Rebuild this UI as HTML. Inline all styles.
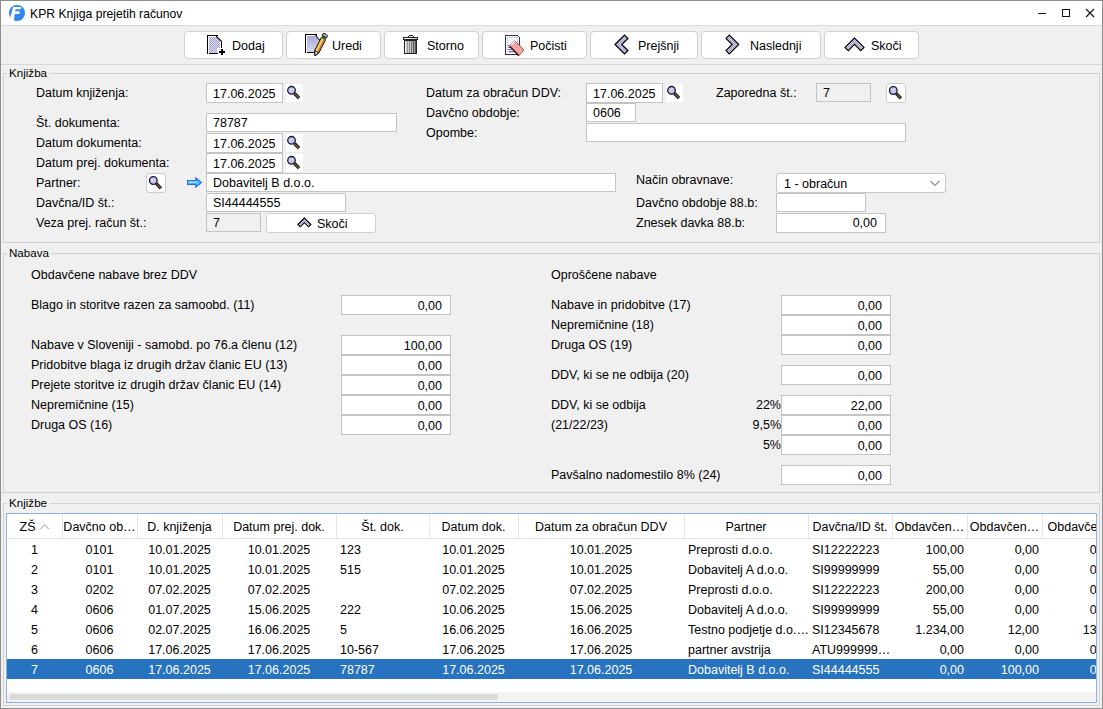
<!DOCTYPE html><html><head><meta charset="utf-8"><style>
html,body{margin:0;padding:0}
body{width:1103px;height:709px;position:relative;overflow:hidden;background:#f0f0f0;font-family:"Liberation Sans",sans-serif;font-size:12.5px;color:#000}
.t{position:absolute;line-height:20px;height:20px;white-space:nowrap}
svg{overflow:visible;display:block}
</style></head><body>
<svg width="0" height="0" style="position:absolute"><defs><pattern id="dith" x="0" y="0" width="2" height="2" patternUnits="userSpaceOnUse"><rect width="2" height="2" fill="#dcdcf4"/><rect width="1" height="1" fill="#a4a4d0"/><rect x="1" y="1" width="1" height="1" fill="#a4a4d0"/></pattern>
<pattern id="dith2" x="0" y="0" width="2" height="2" patternUnits="userSpaceOnUse"><rect width="2" height="2" fill="#d4d4ee"/><rect width="1" height="1" fill="#9c9cc4"/><rect x="1" y="1" width="1" height="1" fill="#9c9cc4"/></pattern>
<linearGradient id="lav" x1="0" y1="0" x2="0" y2="1"><stop offset="0" stop-color="#a8a8d8"/><stop offset="1" stop-color="#d8d8f4"/></linearGradient></defs></svg>
<div style="position:absolute;left:0px;top:0px;width:1103px;height:709px;box-sizing:border-box;border:1px solid #8e8e8e;"></div>
<div style="position:absolute;left:1px;top:1px;width:1101px;height:24px;box-sizing:border-box;background:#fff;"></div>
<div style="position:absolute;left:1px;top:25px;width:1101px;height:1px;box-sizing:border-box;background:#dadada;"></div>
<svg width="19" height="19" viewBox="8 4 19 19" style="position:absolute;left:8px;top:4px" ><circle cx="17" cy="13" r="8" fill="#2f86ee"/><path d="M13.1 7 L21.3 7 L20.9 9.2 L15.5 9.2 L15.1 11.3 L19.8 11.3 L19.4 14 L14.7 14 L13.9 21.5 L11.5 20.2 L10.3 17.8 Z" fill="#fff"/></svg>
<div class="t" style="left:30px;top:4px;font-size:12.2px;">KPR Knjiga prejetih računov</div>
<div style="position:absolute;left:1038px;top:13px;width:8px;height:1px;box-sizing:border-box;background:#111;"></div>
<div style="position:absolute;left:1062px;top:9px;width:8px;height:8px;box-sizing:border-box;border:1px solid #111;"></div>
<svg width="10" height="10" viewBox="1085 8 10 10" style="position:absolute;left:1085px;top:8px" ><path d="M1086 9 L1094 17 M1094 9 L1086 17" stroke="#111" stroke-width="1.1"/></svg>
<div style="position:absolute;left:1px;top:64px;width:1101px;height:1px;box-sizing:border-box;background:#d8d8d8;"></div>
<div style="position:absolute;left:184px;top:31px;width:99px;height:28px;box-sizing:border-box;background:#fff;border:1px solid #d0d0d0;border-radius:4px;"></div>
<div class="t" style="left:232px;top:36px;">Dodaj</div>
<div style="position:absolute;left:286px;top:31px;width:95px;height:28px;box-sizing:border-box;background:#fff;border:1px solid #d0d0d0;border-radius:4px;"></div>
<div class="t" style="left:332px;top:36px;">Uredi</div>
<div style="position:absolute;left:384px;top:31px;width:95px;height:28px;box-sizing:border-box;background:#fff;border:1px solid #d0d0d0;border-radius:4px;"></div>
<div class="t" style="left:427px;top:36px;">Storno</div>
<div style="position:absolute;left:482px;top:31px;width:105px;height:28px;box-sizing:border-box;background:#fff;border:1px solid #d0d0d0;border-radius:4px;"></div>
<div class="t" style="left:530px;top:36px;">Počisti</div>
<div style="position:absolute;left:590px;top:31px;width:108px;height:28px;box-sizing:border-box;background:#fff;border:1px solid #d0d0d0;border-radius:4px;"></div>
<div class="t" style="left:638px;top:36px;">Prejšnji</div>
<div style="position:absolute;left:701px;top:31px;width:120px;height:28px;box-sizing:border-box;background:#fff;border:1px solid #d0d0d0;border-radius:4px;"></div>
<div class="t" style="left:750px;top:36px;">Naslednji</div>
<div style="position:absolute;left:824px;top:31px;width:95px;height:28px;box-sizing:border-box;background:#fff;border:1px solid #d0d0d0;border-radius:4px;"></div>
<div class="t" style="left:871px;top:36px;">Skoči</div>
<svg width="22" height="24" viewBox="205 33 22 24" style="position:absolute;left:205px;top:33px" ><polygon points="209,37 216,37 220,41 220,48 217,48 217,53 209,53" fill="url(#dith)"/><rect x="207" y="35" width="1" height="19" fill="#000" shape-rendering="crispEdges"/><rect x="207" y="35" width="11" height="1" fill="#000" shape-rendering="crispEdges"/><rect x="209" y="53" width="9" height="1" fill="#000" shape-rendering="crispEdges"/><rect x="221" y="41" width="1" height="7" fill="#000" shape-rendering="crispEdges"/><line x1="216.5" y1="36.5" x2="221.5" y2="41.5" stroke="#000" stroke-width="1.1"/><rect x="216" y="36" width="1" height="1" fill="#000" shape-rendering="crispEdges"/><rect x="219" y="51" width="6" height="2" fill="#000" shape-rendering="crispEdges"/><rect x="221" y="49" width="2" height="6" fill="#000" shape-rendering="crispEdges"/></svg>
<svg width="26" height="26" viewBox="303 32 26 26" style="position:absolute;left:303px;top:32px" ><polygon points="307,36 315,36 319,40 314,52 307,52" fill="url(#lav)"/><rect x="305" y="34" width="1" height="19" fill="#000" shape-rendering="crispEdges"/><rect x="305" y="34" width="12" height="1" fill="#000" shape-rendering="crispEdges"/><rect x="307" y="52" width="8" height="1" fill="#000" shape-rendering="crispEdges"/><rect x="316" y="35" width="1" height="1" fill="#000" shape-rendering="crispEdges"/><line x1="315.5" y1="35.5" x2="320" y2="40.5" stroke="#000" stroke-width="1.1"/><polygon points="315,55.8 314.6,50.6 321.4,37.4 325.6,39.6 318.8,52.9" fill="#e8d040" stroke="#000" stroke-width="1"/><line x1="318" y1="52" x2="324.5" y2="39.2" stroke="#e05070" stroke-width="1.3"/><polygon points="315,55.8 314.6,50.6 318.8,52.9" fill="#e4e4cc" stroke="#000" stroke-width="0.9"/><polygon points="321.4,37.4 322.3,35.6 326.5,37.8 325.6,39.6" fill="#208838"/><polygon points="322.3,35.6 323.3,33.6 325.5,33.8 327.5,35.8 326.5,37.8" fill="#e8b0b0" stroke="#000" stroke-width="1"/></svg>
<svg width="17" height="21" viewBox="402 34 17 21" style="position:absolute;left:402px;top:34px" ><rect x="409" y="35" width="4" height="1" fill="#222" shape-rendering="crispEdges"/><rect x="408" y="36" width="1" height="2" fill="#222" shape-rendering="crispEdges"/><rect x="413" y="36" width="1" height="2" fill="#222" shape-rendering="crispEdges"/><rect x="409" y="36" width="4" height="1" fill="#eee" shape-rendering="crispEdges"/><rect x="403" y="37" width="15" height="3" fill="#222" shape-rendering="crispEdges"/><rect x="404" y="38" width="13" height="1" fill="#d4d4d4" shape-rendering="crispEdges"/><rect x="404" y="38" width="6" height="1" fill="#fafafa" shape-rendering="crispEdges"/><rect x="404" y="40" width="13" height="14" fill="#222" shape-rendering="crispEdges"/><rect x="405" y="41" width="1" height="12" fill="#f4f4f4" shape-rendering="crispEdges"/><rect x="406" y="41" width="1" height="12" fill="#c8c8c8" shape-rendering="crispEdges"/><rect x="407" y="41" width="1" height="12" fill="#999" shape-rendering="crispEdges"/><rect x="408" y="41" width="1" height="12" fill="#d0d0d0" shape-rendering="crispEdges"/><rect x="409" y="41" width="1" height="12" fill="#8a8a8a" shape-rendering="crispEdges"/><rect x="410" y="41" width="1" height="12" fill="#c4c4c4" shape-rendering="crispEdges"/><rect x="411" y="41" width="1" height="12" fill="#7a7a7a" shape-rendering="crispEdges"/><rect x="412" y="41" width="1" height="12" fill="#b4b4b4" shape-rendering="crispEdges"/><rect x="413" y="41" width="1" height="12" fill="#555" shape-rendering="crispEdges"/><rect x="414" y="41" width="1" height="12" fill="#a0a0a0" shape-rendering="crispEdges"/><rect x="415" y="41" width="1" height="12" fill="#555" shape-rendering="crispEdges"/></svg>
<svg width="24" height="25" viewBox="503 33 24 25" style="position:absolute;left:503px;top:33px" ><rect x="505" y="35" width="1" height="20" fill="#2c2c68" shape-rendering="crispEdges"/><rect x="505" y="35" width="13" height="1" fill="#2c2c68" shape-rendering="crispEdges"/><rect x="518" y="36" width="1" height="1" fill="#2c2c68" shape-rendering="crispEdges"/><rect x="519" y="37" width="1" height="10" fill="#2c2c68" shape-rendering="crispEdges"/><rect x="506" y="54" width="12" height="1" fill="#2c2c68" shape-rendering="crispEdges"/><rect x="507.5" y="37.5" width="10" height="15" fill="#fbfbff" stroke="#d4d4fa" stroke-width="1" shape-rendering="crispEdges"/><rect x="508" y="45" width="2" height="1" fill="#6868c0" shape-rendering="crispEdges"/><rect x="508" y="47" width="3" height="1" fill="#6868c0" shape-rendering="crispEdges"/><rect x="508" y="49" width="4" height="1" fill="#6868c0" shape-rendering="crispEdges"/><rect x="509" y="51" width="5" height="1" fill="#6868c0" shape-rendering="crispEdges"/><polygon points="514.5,40.5 524,50 519,55.5 509.5,45.5" fill="#f0a4a4" stroke="#a85858" stroke-width="1"/><line x1="511" y1="45" x2="515" y2="41" stroke="#fff" stroke-width="1.2"/><line x1="509.8" y1="46.3" x2="518.8" y2="55.8" stroke="#501818" stroke-width="1.6"/></svg>
<svg width="20" height="24" viewBox="612 33 20 24" style="position:absolute;left:612px;top:33px" ><polygon points="615,44.5 624.5,35 628,38.5 621.8,44.5 628,50.5 624.5,54" fill="url(#dith2)" stroke="#000" stroke-width="1.15"/></svg>
<svg width="20" height="24" viewBox="722 33 20 24" style="position:absolute;left:722px;top:33px" ><polygon points="738.7,44.5 729.3,35 726,38.4 732.2,44.5 726,50.5 729.3,54" fill="url(#dith2)" stroke="#000" stroke-width="1.15"/></svg>
<svg width="24" height="18" viewBox="842 35 24 18" style="position:absolute;left:842px;top:35px" ><polygon points="854.5,38 845,47.4 848.3,50.6 854.5,44.4 860.7,50.6 864,47.4" fill="url(#dith2)" stroke="#000" stroke-width="1.15"/></svg>
<div style="position:absolute;left:3px;top:73px;width:1097px;height:170px;box-sizing:border-box;border:1px solid #d2d2d2;"></div>
<div style="position:absolute;left:7px;top:67px;width:42px;height:13px;box-sizing:border-box;background:#f0f0f0;"></div>
<div class="t" style="left:9px;top:63px;font-size:11.6px;">Knjižba</div>
<div style="position:absolute;left:3px;top:253px;width:1097px;height:240px;box-sizing:border-box;border:1px solid #d2d2d2;"></div>
<div style="position:absolute;left:7px;top:247px;width:44px;height:13px;box-sizing:border-box;background:#f0f0f0;"></div>
<div class="t" style="left:9px;top:243px;font-size:11.6px;">Nabava</div>
<div style="position:absolute;left:3px;top:503px;width:1097px;height:203px;box-sizing:border-box;border:1px solid #d2d2d2;"></div>
<div style="position:absolute;left:7px;top:497px;width:43px;height:13px;box-sizing:border-box;background:#f0f0f0;"></div>
<div class="t" style="left:9px;top:493px;font-size:11.6px;">Knjižbe</div>
<div class="t" style="left:36px;top:83px;">Datum knjiženja:</div>
<div style="position:absolute;left:206px;top:83px;width:77px;height:20px;box-sizing:border-box;background:#fff;border:1px solid #c4c4c4;"></div>
<div class="t" style="left:213px;top:84px;">17.06.2025</div>
<div style="position:absolute;left:286px;top:84px;width:17px;height:18px;box-sizing:border-box;background:#fff;"></div>
<svg width="17" height="18" viewBox="286 84 17 18" style="position:absolute;left:286px;top:84px" ><circle cx="291.5" cy="90.3" r="3.8" fill="#c4c4e8" stroke="#16163a" stroke-width="1.3"/><path d="M289.5 91.3 L292.5 88.3" stroke="#e8e8f8" stroke-width="1"/><line x1="294.5" y1="93.5" x2="299.1" y2="98.1" stroke="#111" stroke-width="3.2"/><line x1="295.1" y1="94.1" x2="298.9" y2="97.89999999999999" stroke="#a86c38" stroke-width="1.1"/></svg>
<div class="t" style="left:36px;top:113px;">Št. dokumenta:</div>
<div style="position:absolute;left:206px;top:113px;width:191px;height:19px;box-sizing:border-box;background:#fff;border:1px solid #c4c4c4;"></div>
<div class="t" style="left:213px;top:113px;">78787</div>
<div class="t" style="left:36px;top:133px;">Datum dokumenta:</div>
<div style="position:absolute;left:206px;top:133px;width:77px;height:20px;box-sizing:border-box;background:#fff;border:1px solid #c4c4c4;"></div>
<div class="t" style="left:213px;top:134px;">17.06.2025</div>
<div style="position:absolute;left:286px;top:134px;width:17px;height:18px;box-sizing:border-box;background:#fff;"></div>
<svg width="17" height="18" viewBox="286 134 17 18" style="position:absolute;left:286px;top:134px" ><circle cx="291.5" cy="140.3" r="3.8" fill="#c4c4e8" stroke="#16163a" stroke-width="1.3"/><path d="M289.5 141.3 L292.5 138.3" stroke="#e8e8f8" stroke-width="1"/><line x1="294.5" y1="143.5" x2="299.1" y2="148.10000000000002" stroke="#111" stroke-width="3.2"/><line x1="295.1" y1="144.10000000000002" x2="298.9" y2="147.9" stroke="#a86c38" stroke-width="1.1"/></svg>
<div class="t" style="left:36px;top:153px;">Datum prej. dokumenta:</div>
<div style="position:absolute;left:206px;top:153px;width:77px;height:20px;box-sizing:border-box;background:#fff;border:1px solid #c4c4c4;"></div>
<div class="t" style="left:213px;top:154px;">17.06.2025</div>
<div style="position:absolute;left:286px;top:154px;width:17px;height:18px;box-sizing:border-box;background:#fff;"></div>
<svg width="17" height="18" viewBox="286 154 17 18" style="position:absolute;left:286px;top:154px" ><circle cx="291.5" cy="160.3" r="3.8" fill="#c4c4e8" stroke="#16163a" stroke-width="1.3"/><path d="M289.5 161.3 L292.5 158.3" stroke="#e8e8f8" stroke-width="1"/><line x1="294.5" y1="163.5" x2="299.1" y2="168.10000000000002" stroke="#111" stroke-width="3.2"/><line x1="295.1" y1="164.10000000000002" x2="298.9" y2="167.9" stroke="#a86c38" stroke-width="1.1"/></svg>
<div class="t" style="left:36px;top:173px;">Partner:</div>
<div style="position:absolute;left:146px;top:173px;width:20px;height:20px;box-sizing:border-box;background:#fff;border:1px solid #cdcdcd;border-radius:3px;"></div>
<svg width="20" height="20" viewBox="146 173 20 20" style="position:absolute;left:146px;top:173px" ><circle cx="153.3" cy="180.5" r="3.8" fill="#c4c4e8" stroke="#16163a" stroke-width="1.3"/><path d="M151.3 181.5 L154.3 178.5" stroke="#e8e8f8" stroke-width="1"/><line x1="156.3" y1="183.7" x2="160.9" y2="188.3" stroke="#111" stroke-width="3.2"/><line x1="156.9" y1="184.3" x2="160.70000000000002" y2="188.1" stroke="#a86c38" stroke-width="1.1"/></svg>
<svg width="18" height="14" viewBox="185 176 18 14" style="position:absolute;left:185px;top:176px" ><path d="M187.6 180.6 H195.8 V178 L201.4 182.5 L195.8 187 V184.4 H187.6 Z" fill="#48ccfc" stroke="#2a64f2" stroke-width="1.1"/><path d="M188.6 182 H196.6" stroke="#c8f4ff" stroke-width="1"/></svg>
<div style="position:absolute;left:206px;top:173px;width:410px;height:19px;box-sizing:border-box;background:#fff;border:1px solid #c4c4c4;"></div>
<div class="t" style="left:213px;top:173px;">Dobavitelj B d.o.o.</div>
<div class="t" style="left:36px;top:193px;">Davčna/ID št.:</div>
<div style="position:absolute;left:206px;top:193px;width:140px;height:19px;box-sizing:border-box;background:#fff;border:1px solid #c4c4c4;"></div>
<div class="t" style="left:213px;top:193px;">SI44444555</div>
<div class="t" style="left:36px;top:213px;">Veza prej. račun št.:</div>
<div style="position:absolute;left:206px;top:213px;width:55px;height:19px;box-sizing:border-box;background:#f0f0f0;border:1px solid #c4c4c4;"></div>
<div class="t" style="left:213px;top:213px;">7</div>
<div style="position:absolute;left:266px;top:213px;width:110px;height:20px;box-sizing:border-box;background:#fff;border:1px solid #d0d0d0;border-radius:3px;"></div>
<svg width="16" height="12" viewBox="296 216 16 12" style="position:absolute;left:296px;top:216px" ><polygon points="304.4,218 297.9,224.5 300.3,226.8 304.4,222.7 308.5,226.8 310.9,224.5" fill="url(#dith2)" stroke="#000" stroke-width="1.15"/></svg>
<div class="t" style="left:317px;top:214px;">Skoči</div>
<div class="t" style="left:426px;top:83px;">Datum za obračun DDV:</div>
<div style="position:absolute;left:586px;top:83px;width:77px;height:20px;box-sizing:border-box;background:#fff;border:1px solid #c4c4c4;"></div>
<div class="t" style="left:593px;top:84px;">17.06.2025</div>
<div style="position:absolute;left:666px;top:84px;width:17px;height:18px;box-sizing:border-box;background:#fff;"></div>
<svg width="17" height="18" viewBox="666 84 17 18" style="position:absolute;left:666px;top:84px" ><circle cx="671.5" cy="90.3" r="3.8" fill="#c4c4e8" stroke="#16163a" stroke-width="1.3"/><path d="M669.5 91.3 L672.5 88.3" stroke="#e8e8f8" stroke-width="1"/><line x1="674.5" y1="93.5" x2="679.1" y2="98.1" stroke="#111" stroke-width="3.2"/><line x1="675.1" y1="94.1" x2="678.9" y2="97.89999999999999" stroke="#a86c38" stroke-width="1.1"/></svg>
<div class="t" style="left:716px;top:83px;">Zaporedna št.:</div>
<div style="position:absolute;left:816px;top:83px;width:55px;height:19px;box-sizing:border-box;background:#f0f0f0;border:1px solid #c4c4c4;"></div>
<div class="t" style="left:823px;top:83px;">7</div>
<div style="position:absolute;left:886px;top:83px;width:20px;height:20px;box-sizing:border-box;background:#fff;border:1px solid #cdcdcd;border-radius:3px;"></div>
<svg width="20" height="20" viewBox="886 83 20 20" style="position:absolute;left:886px;top:83px" ><circle cx="893.3" cy="90.5" r="3.8" fill="#c4c4e8" stroke="#16163a" stroke-width="1.3"/><path d="M891.3 91.5 L894.3 88.5" stroke="#e8e8f8" stroke-width="1"/><line x1="896.3" y1="93.7" x2="900.9" y2="98.3" stroke="#111" stroke-width="3.2"/><line x1="896.9" y1="94.3" x2="900.6999999999999" y2="98.1" stroke="#a86c38" stroke-width="1.1"/></svg>
<div class="t" style="left:426px;top:103px;">Davčno obdobje:</div>
<div style="position:absolute;left:586px;top:103px;width:50px;height:19px;box-sizing:border-box;background:#fff;border:1px solid #c4c4c4;"></div>
<div class="t" style="left:593px;top:103px;">0606</div>
<div class="t" style="left:426px;top:123px;">Opombe:</div>
<div style="position:absolute;left:586px;top:123px;width:320px;height:19px;box-sizing:border-box;background:#fff;border:1px solid #c4c4c4;"></div>
<div class="t" style="left:636px;top:170px;">Način obravnave:</div>
<div style="position:absolute;left:776px;top:173px;width:170px;height:20px;box-sizing:border-box;background:#fff;border:1px solid #c8c8c8;border-radius:3px;"></div>
<div class="t" style="left:784px;top:174px;">1 - obračun</div>
<svg width="13" height="9" viewBox="928 179 13 9" style="position:absolute;left:928px;top:179px" ><path d="M930.5 181 L935 185.5 L939.5 181" fill="none" stroke="#444" stroke-width="1"/></svg>
<div class="t" style="left:636px;top:193px;">Davčno obdobje 88.b:</div>
<div style="position:absolute;left:776px;top:193px;width:90px;height:19px;box-sizing:border-box;background:#fff;border:1px solid #c4c4c4;"></div>
<div class="t" style="left:636px;top:213px;">Znesek davka 88.b:</div>
<div style="position:absolute;left:776px;top:213px;width:110px;height:20px;box-sizing:border-box;background:#fff;border:1px solid #c4c4c4;"></div>
<div class="t" style="right:226px;top:213px;text-align:right;">0,00</div>
<div class="t" style="left:31px;top:265px;">Obdavčene nabave brez DDV</div>
<div class="t" style="left:31px;top:295px;">Blago in storitve razen za samoobd. (11)</div>
<div style="position:absolute;left:341px;top:295px;width:110px;height:20px;box-sizing:border-box;background:#fff;border:1px solid #c4c4c4;"></div>
<div class="t" style="right:661px;top:296px;text-align:right;">0,00</div>
<div class="t" style="left:31px;top:335px;">Nabave v Sloveniji - samobd. po 76.a členu (12)</div>
<div style="position:absolute;left:341px;top:335px;width:110px;height:20px;box-sizing:border-box;background:#fff;border:1px solid #c4c4c4;"></div>
<div class="t" style="right:661px;top:336px;text-align:right;">100,00</div>
<div class="t" style="left:31px;top:355px;">Pridobitve blaga iz drugih držav članic EU (13)</div>
<div style="position:absolute;left:341px;top:355px;width:110px;height:20px;box-sizing:border-box;background:#fff;border:1px solid #c4c4c4;"></div>
<div class="t" style="right:661px;top:356px;text-align:right;">0,00</div>
<div class="t" style="left:31px;top:375px;">Prejete storitve iz drugih držav članic EU (14)</div>
<div style="position:absolute;left:341px;top:375px;width:110px;height:20px;box-sizing:border-box;background:#fff;border:1px solid #c4c4c4;"></div>
<div class="t" style="right:661px;top:376px;text-align:right;">0,00</div>
<div class="t" style="left:31px;top:395px;">Nepremičnine (15)</div>
<div style="position:absolute;left:341px;top:395px;width:110px;height:20px;box-sizing:border-box;background:#fff;border:1px solid #c4c4c4;"></div>
<div class="t" style="right:661px;top:396px;text-align:right;">0,00</div>
<div class="t" style="left:31px;top:415px;">Druga OS (16)</div>
<div style="position:absolute;left:341px;top:415px;width:110px;height:20px;box-sizing:border-box;background:#fff;border:1px solid #c4c4c4;"></div>
<div class="t" style="right:661px;top:416px;text-align:right;">0,00</div>
<div class="t" style="left:551px;top:265px;">Oproščene nabave</div>
<div class="t" style="left:551px;top:295px;">Nabave in pridobitve (17)</div>
<div style="position:absolute;left:781px;top:295px;width:110px;height:20px;box-sizing:border-box;background:#fff;border:1px solid #c4c4c4;"></div>
<div class="t" style="right:221px;top:296px;text-align:right;">0,00</div>
<div class="t" style="left:551px;top:315px;">Nepremičnine (18)</div>
<div style="position:absolute;left:781px;top:315px;width:110px;height:20px;box-sizing:border-box;background:#fff;border:1px solid #c4c4c4;"></div>
<div class="t" style="right:221px;top:316px;text-align:right;">0,00</div>
<div class="t" style="left:551px;top:335px;">Druga OS (19)</div>
<div style="position:absolute;left:781px;top:335px;width:110px;height:20px;box-sizing:border-box;background:#fff;border:1px solid #c4c4c4;"></div>
<div class="t" style="right:221px;top:336px;text-align:right;">0,00</div>
<div class="t" style="left:551px;top:365px;">DDV, ki se ne odbija (20)</div>
<div style="position:absolute;left:781px;top:365px;width:110px;height:20px;box-sizing:border-box;background:#fff;border:1px solid #c4c4c4;"></div>
<div class="t" style="right:221px;top:366px;text-align:right;">0,00</div>
<div class="t" style="left:551px;top:395px;">DDV, ki se odbija</div>
<div style="position:absolute;left:781px;top:395px;width:110px;height:20px;box-sizing:border-box;background:#fff;border:1px solid #c4c4c4;"></div>
<div class="t" style="right:221px;top:396px;text-align:right;">22,00</div>
<div class="t" style="left:551px;top:415px;">(21/22/23)</div>
<div style="position:absolute;left:781px;top:415px;width:110px;height:20px;box-sizing:border-box;background:#fff;border:1px solid #c4c4c4;"></div>
<div class="t" style="right:221px;top:416px;text-align:right;">0,00</div>
<div style="position:absolute;left:781px;top:435px;width:110px;height:20px;box-sizing:border-box;background:#fff;border:1px solid #c4c4c4;"></div>
<div class="t" style="right:221px;top:436px;text-align:right;">0,00</div>
<div class="t" style="left:551px;top:465px;">Pavšalno nadomestilo 8% (24)</div>
<div style="position:absolute;left:781px;top:465px;width:110px;height:20px;box-sizing:border-box;background:#fff;border:1px solid #c4c4c4;"></div>
<div class="t" style="right:221px;top:466px;text-align:right;">0,00</div>
<div class="t" style="right:322px;top:395px;text-align:right;">22%</div>
<div class="t" style="right:322px;top:415px;text-align:right;">9,5%</div>
<div class="t" style="right:322px;top:435px;text-align:right;">5%</div>
<div style="position:absolute;left:6px;top:513px;width:1091px;height:190px;box-sizing:border-box;border:1px solid #8cb4e0;background:#fff;"></div>
<div style="position:absolute;left:7px;top:538px;width:1089px;height:1px;box-sizing:border-box;background:#e2e2e2;"></div>
<div style="position:absolute;left:62px;top:514px;width:1px;height:24px;box-sizing:border-box;background:#e6e6e6;"></div>
<div style="position:absolute;left:137px;top:514px;width:1px;height:24px;box-sizing:border-box;background:#e6e6e6;"></div>
<div style="position:absolute;left:222px;top:514px;width:1px;height:24px;box-sizing:border-box;background:#e6e6e6;"></div>
<div style="position:absolute;left:336px;top:514px;width:1px;height:24px;box-sizing:border-box;background:#e6e6e6;"></div>
<div style="position:absolute;left:429px;top:514px;width:1px;height:24px;box-sizing:border-box;background:#e6e6e6;"></div>
<div style="position:absolute;left:518px;top:514px;width:1px;height:24px;box-sizing:border-box;background:#e6e6e6;"></div>
<div style="position:absolute;left:684px;top:514px;width:1px;height:24px;box-sizing:border-box;background:#e6e6e6;"></div>
<div style="position:absolute;left:808px;top:514px;width:1px;height:24px;box-sizing:border-box;background:#e6e6e6;"></div>
<div style="position:absolute;left:892px;top:514px;width:1px;height:24px;box-sizing:border-box;background:#e6e6e6;"></div>
<div style="position:absolute;left:967px;top:514px;width:1px;height:24px;box-sizing:border-box;background:#e6e6e6;"></div>
<div style="position:absolute;left:1042px;top:514px;width:1px;height:24px;box-sizing:border-box;background:#e6e6e6;"></div>
<div style="position:absolute;left:7px;top:514px;width:1089px;height:188px;overflow:hidden">
<div class="t" style="left:-279.5px;width:600px;top:3px;text-align:center;">ZŠ</div>
<div class="t" style="left:-207.5px;width:600px;top:3px;text-align:center;">Davčno ob…</div>
<div class="t" style="left:-127.5px;width:600px;top:3px;text-align:center;">D. knjiženja</div>
<div class="t" style="left:-28.0px;width:600px;top:3px;text-align:center;">Datum prej. dok.</div>
<div class="t" style="left:75.5px;width:600px;top:3px;text-align:center;">Št. dok.</div>
<div class="t" style="left:166.5px;width:600px;top:3px;text-align:center;">Datum dok.</div>
<div class="t" style="left:294.0px;width:600px;top:3px;text-align:center;">Datum za obračun DDV</div>
<div class="t" style="left:439.0px;width:600px;top:3px;text-align:center;">Partner</div>
<div class="t" style="left:543.0px;width:600px;top:3px;text-align:center;">Davčna/ID št.</div>
<div class="t" style="left:622.5px;width:600px;top:3px;text-align:center;">Obdavčen…</div>
<div class="t" style="left:697.5px;width:600px;top:3px;text-align:center;">Obdavčen…</div>
<div class="t" style="left:772.5px;width:600px;top:3px;text-align:center;">Obdavčeno</div>
<svg width="10" height="6" viewBox="0 0 10 6" style="position:absolute;left:33px;top:10px">
<path d="M0.2 5.2 L4.5 0.7 L8.8 5.2" fill="none" stroke="#999" stroke-width="1"/></svg>
<div class="t" style="left:-272.5px;width:600px;top:26px;text-align:center;">1</div>
<div class="t" style="left:-207.5px;width:600px;top:26px;text-align:center;">0101</div>
<div class="t" style="left:-127.5px;width:600px;top:26px;text-align:center;">10.01.2025</div>
<div class="t" style="left:-28.0px;width:600px;top:26px;text-align:center;">10.01.2025</div>
<div class="t" style="left:333px;top:26px;">123</div>
<div class="t" style="left:166.5px;width:600px;top:26px;text-align:center;">10.01.2025</div>
<div class="t" style="left:294.0px;width:600px;top:26px;text-align:center;">10.01.2025</div>
<div class="t" style="left:681px;top:26px;">Preprosti d.o.o.</div>
<div class="t" style="left:805px;top:26px;">SI12222223</div>
<div class="t" style="left:657px;width:300px;top:26px;text-align:right;">100,00</div>
<div class="t" style="left:732px;width:300px;top:26px;text-align:right;">0,00</div>
<div class="t" style="left:807px;width:300px;top:26px;text-align:right;">0,00</div>
<div class="t" style="left:-272.5px;width:600px;top:46px;text-align:center;">2</div>
<div class="t" style="left:-207.5px;width:600px;top:46px;text-align:center;">0101</div>
<div class="t" style="left:-127.5px;width:600px;top:46px;text-align:center;">10.01.2025</div>
<div class="t" style="left:-28.0px;width:600px;top:46px;text-align:center;">10.01.2025</div>
<div class="t" style="left:333px;top:46px;">515</div>
<div class="t" style="left:166.5px;width:600px;top:46px;text-align:center;">10.01.2025</div>
<div class="t" style="left:294.0px;width:600px;top:46px;text-align:center;">10.01.2025</div>
<div class="t" style="left:681px;top:46px;">Dobavitelj A d.o.o.</div>
<div class="t" style="left:805px;top:46px;">SI99999999</div>
<div class="t" style="left:657px;width:300px;top:46px;text-align:right;">55,00</div>
<div class="t" style="left:732px;width:300px;top:46px;text-align:right;">0,00</div>
<div class="t" style="left:807px;width:300px;top:46px;text-align:right;">0,00</div>
<div class="t" style="left:-272.5px;width:600px;top:66px;text-align:center;">3</div>
<div class="t" style="left:-207.5px;width:600px;top:66px;text-align:center;">0202</div>
<div class="t" style="left:-127.5px;width:600px;top:66px;text-align:center;">07.02.2025</div>
<div class="t" style="left:-28.0px;width:600px;top:66px;text-align:center;">07.02.2025</div>
<div class="t" style="left:166.5px;width:600px;top:66px;text-align:center;">07.02.2025</div>
<div class="t" style="left:294.0px;width:600px;top:66px;text-align:center;">07.02.2025</div>
<div class="t" style="left:681px;top:66px;">Preprosti d.o.o.</div>
<div class="t" style="left:805px;top:66px;">SI12222223</div>
<div class="t" style="left:657px;width:300px;top:66px;text-align:right;">200,00</div>
<div class="t" style="left:732px;width:300px;top:66px;text-align:right;">0,00</div>
<div class="t" style="left:807px;width:300px;top:66px;text-align:right;">0,00</div>
<div class="t" style="left:-272.5px;width:600px;top:86px;text-align:center;">4</div>
<div class="t" style="left:-207.5px;width:600px;top:86px;text-align:center;">0606</div>
<div class="t" style="left:-127.5px;width:600px;top:86px;text-align:center;">01.07.2025</div>
<div class="t" style="left:-28.0px;width:600px;top:86px;text-align:center;">15.06.2025</div>
<div class="t" style="left:333px;top:86px;">222</div>
<div class="t" style="left:166.5px;width:600px;top:86px;text-align:center;">10.06.2025</div>
<div class="t" style="left:294.0px;width:600px;top:86px;text-align:center;">15.06.2025</div>
<div class="t" style="left:681px;top:86px;">Dobavitelj A d.o.o.</div>
<div class="t" style="left:805px;top:86px;">SI99999999</div>
<div class="t" style="left:657px;width:300px;top:86px;text-align:right;">55,00</div>
<div class="t" style="left:732px;width:300px;top:86px;text-align:right;">0,00</div>
<div class="t" style="left:807px;width:300px;top:86px;text-align:right;">0,00</div>
<div class="t" style="left:-272.5px;width:600px;top:106px;text-align:center;">5</div>
<div class="t" style="left:-207.5px;width:600px;top:106px;text-align:center;">0606</div>
<div class="t" style="left:-127.5px;width:600px;top:106px;text-align:center;">02.07.2025</div>
<div class="t" style="left:-28.0px;width:600px;top:106px;text-align:center;">16.06.2025</div>
<div class="t" style="left:333px;top:106px;">5</div>
<div class="t" style="left:166.5px;width:600px;top:106px;text-align:center;">16.06.2025</div>
<div class="t" style="left:294.0px;width:600px;top:106px;text-align:center;">16.06.2025</div>
<div class="t" style="left:681px;top:106px;">Testno podjetje d.o.…</div>
<div class="t" style="left:805px;top:106px;">SI12345678</div>
<div class="t" style="left:657px;width:300px;top:106px;text-align:right;">1.234,00</div>
<div class="t" style="left:732px;width:300px;top:106px;text-align:right;">12,00</div>
<div class="t" style="left:807px;width:300px;top:106px;text-align:right;">13,00</div>
<div class="t" style="left:-272.5px;width:600px;top:126px;text-align:center;">6</div>
<div class="t" style="left:-207.5px;width:600px;top:126px;text-align:center;">0606</div>
<div class="t" style="left:-127.5px;width:600px;top:126px;text-align:center;">17.06.2025</div>
<div class="t" style="left:-28.0px;width:600px;top:126px;text-align:center;">17.06.2025</div>
<div class="t" style="left:333px;top:126px;">10-567</div>
<div class="t" style="left:166.5px;width:600px;top:126px;text-align:center;">17.06.2025</div>
<div class="t" style="left:294.0px;width:600px;top:126px;text-align:center;">17.06.2025</div>
<div class="t" style="left:681px;top:126px;">partner avstrija</div>
<div class="t" style="left:805px;top:126px;">ATU999999…</div>
<div class="t" style="left:657px;width:300px;top:126px;text-align:right;">0,00</div>
<div class="t" style="left:732px;width:300px;top:126px;text-align:right;">0,00</div>
<div class="t" style="left:807px;width:300px;top:126px;text-align:right;">0,00</div>
<div style="position:absolute;left:0px;top:145px;width:1089px;height:20px;background:#2873c0"></div>
<div class="t" style="left:-272.5px;width:600px;top:146px;text-align:center;color:#fff;">7</div>
<div class="t" style="left:-207.5px;width:600px;top:146px;text-align:center;color:#fff;">0606</div>
<div class="t" style="left:-127.5px;width:600px;top:146px;text-align:center;color:#fff;">17.06.2025</div>
<div class="t" style="left:-28.0px;width:600px;top:146px;text-align:center;color:#fff;">17.06.2025</div>
<div class="t" style="left:333px;top:146px;color:#fff;">78787</div>
<div class="t" style="left:166.5px;width:600px;top:146px;text-align:center;color:#fff;">17.06.2025</div>
<div class="t" style="left:294.0px;width:600px;top:146px;text-align:center;color:#fff;">17.06.2025</div>
<div class="t" style="left:681px;top:146px;color:#fff;">Dobavitelj B d.o.o.</div>
<div class="t" style="left:805px;top:146px;color:#fff;">SI44444555</div>
<div class="t" style="left:657px;width:300px;top:146px;text-align:right;color:#fff;">0,00</div>
<div class="t" style="left:732px;width:300px;top:146px;text-align:right;color:#fff;">100,00</div>
<div class="t" style="left:807px;width:300px;top:146px;text-align:right;color:#fff;">0,00</div>
<div style="position:absolute;left:0px;top:178px;width:1089px;height:10px;background:#f3f3f3"></div>
<div style="position:absolute;left:2px;top:180px;width:489px;height:6px;background:#dadada;border-radius:3px"></div>
</div>
</body></html>
